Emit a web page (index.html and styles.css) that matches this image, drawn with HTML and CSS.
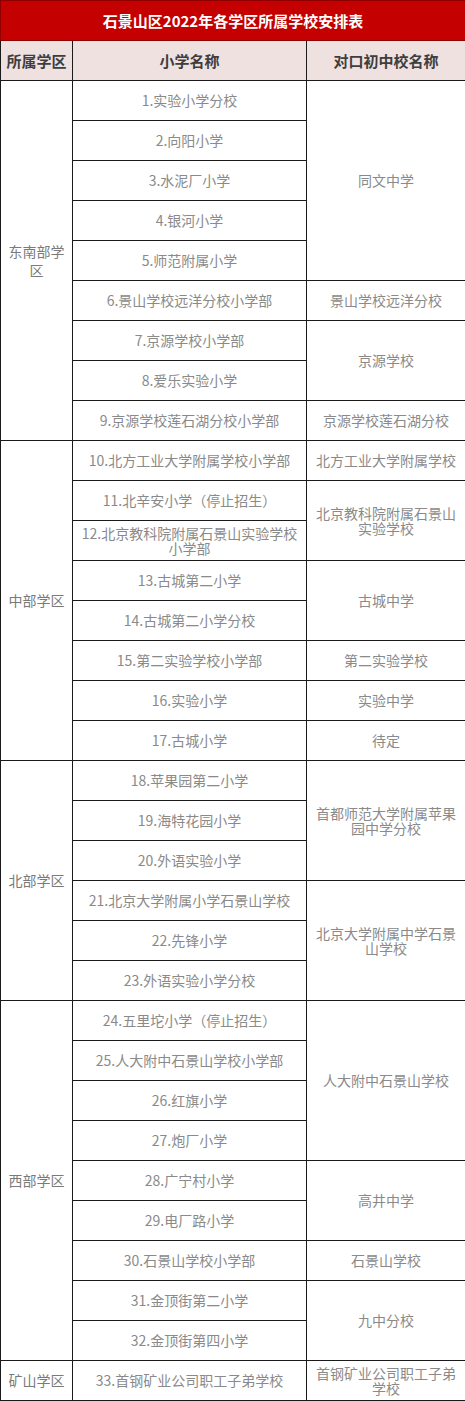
FILE: index.html
```html
<!DOCTYPE html>
<html lang="zh">
<head>
<meta charset="utf-8">
<title>石景山区2022年各学区所属学校安排表</title>
<link rel="stylesheet" href="styles.css">
</head>
<body>
<table class="sched">
  <colgroup>
    <col class="c-dist">
    <col class="c-pri">
    <col class="c-mid">
  </colgroup>
  <thead>
    <tr class="title-row"><th colspan="3">石景山区2022年各学区所属学校安排表</th></tr>
    <tr class="head-row"><th>所属学区</th><th>小学名称</th><th>对口初中校名称</th></tr>
  </thead>
  <tbody>
    <tr><td class="dist" rowspan="9">东南部学区</td><td>1.实验小学分校</td><td rowspan="5">同文中学</td></tr>
    <tr><td>2.向阳小学</td></tr>
    <tr><td>3.水泥厂小学</td></tr>
    <tr><td>4.银河小学</td></tr>
    <tr><td>5.师范附属小学</td></tr>
    <tr><td>6.景山学校远洋分校小学部</td><td>景山学校远洋分校</td></tr>
    <tr><td>7.京源学校小学部</td><td rowspan="2">京源学校</td></tr>
    <tr><td>8.爱乐实验小学</td></tr>
    <tr><td>9.京源学校莲石湖分校小学部</td><td>京源学校莲石湖分校</td></tr>

    <tr><td class="dist" rowspan="8">中部学区</td><td>10.北方工业大学附属学校小学部</td><td>北方工业大学附属学校</td></tr>
    <tr><td>11.北辛安小学（停止招生）</td><td rowspan="2" class="tight">北京教科院附属石景山实验学校</td></tr>
    <tr><td class="tight">12.北京教科院附属石景山实验学校小学部</td></tr>
    <tr><td>13.古城第二小学</td><td rowspan="2">古城中学</td></tr>
    <tr><td>14.古城第二小学分校</td></tr>
    <tr><td>15.第二实验学校小学部</td><td>第二实验学校</td></tr>
    <tr><td>16.实验小学</td><td>实验中学</td></tr>
    <tr><td>17.古城小学</td><td>待定</td></tr>

    <tr><td class="dist" rowspan="6">北部学区</td><td>18.苹果园第二小学</td><td rowspan="3" class="tight">首都师范大学附属苹果园中学分校</td></tr>
    <tr><td>19.海特花园小学</td></tr>
    <tr><td>20.外语实验小学</td></tr>
    <tr><td>21.北京大学附属小学石景山学校</td><td rowspan="3" class="tight">北京大学附属中学石景山学校</td></tr>
    <tr><td>22.先锋小学</td></tr>
    <tr><td>23.外语实验小学分校</td></tr>

    <tr><td class="dist" rowspan="9">西部学区</td><td>24.五里坨小学（停止招生）</td><td rowspan="4">人大附中石景山学校</td></tr>
    <tr><td>25.人大附中石景山学校小学部</td></tr>
    <tr><td>26.红旗小学</td></tr>
    <tr><td>27.炮厂小学</td></tr>
    <tr><td>28.广宁村小学</td><td rowspan="2">高井中学</td></tr>
    <tr><td>29.电厂路小学</td></tr>
    <tr><td>30.石景山学校小学部</td><td>石景山学校</td></tr>
    <tr><td>31.金顶街第二小学</td><td rowspan="2">九中分校</td></tr>
    <tr><td>32.金顶街第四小学</td></tr>

    <tr><td class="dist">矿山学区</td><td>33.首钢矿业公司职工子弟学校</td><td class="tight">首钢矿业公司职工子弟学校</td></tr>
  </tbody>
</table>
</body>
</html>
```

FILE: styles.css
```css
html, body {
  margin: 0;
  padding: 0;
  background: #ffffff;
}

body {
  font-family: "Noto Sans CJK SC", "Noto Sans", sans-serif;
}

.sched {
  width: 465px;
  border-collapse: collapse;
  table-layout: fixed;
}

.c-dist { width: 72px; }
.c-pri { width: 234px; }
.c-mid { width: 159px; }

.sched th,
.sched td {
  border: 1px solid #1a1a1a;
  padding: 0 7px;
  text-align: center;
  vertical-align: middle;
}

.sched tr {
  height: 40px;
}

.title-row th {
  background: #c40000;
  border: 1px solid #8e0000;
  color: #ffffff;
  font-size: 15px;
  font-weight: bold;
}

.head-row th {
  background: #f0e1e1;
  color: #3e3e3e;
  font-size: 15px;
  font-weight: bold;
  padding: 0 2px;
  white-space: nowrap;
}

.sched td {
  color: #8a8a8a;
  font-size: 14px;
  line-height: 19px;
}

.sched td.dist {
  color: #7a7a7a;
}

.sched td.tight {
  line-height: 15px;
}
```
